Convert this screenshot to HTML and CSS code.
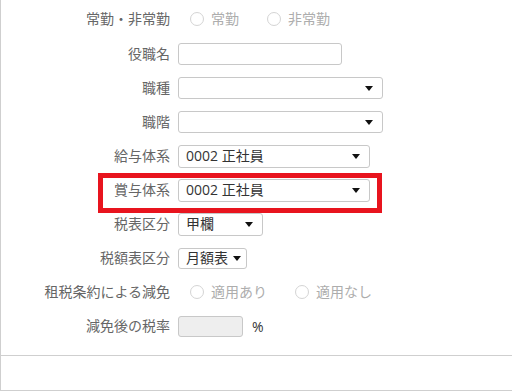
FILE: index.html
```html
<!DOCTYPE html>
<html lang="ja">
<head>
<meta charset="utf-8">
<link rel="stylesheet" href="styles.css">
</head>
<body>
<div class="panel">
  <div class="form">
    <div class="row first">
      <div class="label">常勤・非常勤</div>
      <div class="radios">
        <span class="opt"><span class="radio"></span><span class="rtext">常勤</span></span>
        <span class="opt"><span class="radio"></span><span class="rtext">非常勤</span></span>
      </div>
    </div>
    <div class="row">
      <div class="label">役職名</div>
      <div class="input w-title"></div>
    </div>
    <div class="row">
      <div class="label">職種</div>
      <div class="select w-wide"><span class="val"></span><span class="caret"></span></div>
    </div>
    <div class="row">
      <div class="label">職階</div>
      <div class="select w-wide"><span class="val"></span><span class="caret"></span></div>
    </div>
    <div class="row">
      <div class="label">給与体系</div>
      <div class="select w-mid"><span class="val">0002 正社員</span><span class="caret"></span></div>
    </div>
    <div class="row highlight">
      <div class="label">賞与体系</div>
      <div class="select w-mid"><span class="val">0002 正社員</span><span class="caret"></span></div>
    </div>
    <div class="row">
      <div class="label">税表区分</div>
      <div class="select w-kou"><span class="val">甲欄</span><span class="caret"></span></div>
    </div>
    <div class="row">
      <div class="label">税額表区分</div>
      <div class="select compact"><span class="val">月額表</span><span class="caret"></span></div>
    </div>
    <div class="row">
      <div class="label">租税条約による減免</div>
      <div class="radios">
        <span class="opt"><span class="radio"></span><span class="rtext">適用あり</span></span>
        <span class="opt"><span class="radio"></span><span class="rtext">適用なし</span></span>
      </div>
    </div>
    <div class="row">
      <div class="label">減免後の税率</div>
      <div class="input w-rate disabled"></div>
      <span class="unit">%</span>
    </div>
  </div>
  <div class="footer"></div>
</div>
</body>
</html>
```

FILE: styles.css
```css
html, body {
  margin: 0;
  padding: 0;
  background: #fff;
}
body {
  font-family: "Open Sans", "Noto Sans CJK JP", sans-serif;
  font-size: 14px;
  color: #333;
}
.panel {
  border-left: 1px solid #cfcfcf;
  width: 511px;
}
.form {
  height: 356px;
  box-sizing: border-box;
  padding-top: 1px;
  border-bottom: 1px solid #cfcfcf;
}
.footer {
  height: 34px;
  border-bottom: 1px solid #cfcfcf;
}
.row {
  display: flex;
  align-items: center;
  height: 34px;
  position: relative;
}
.row.first {
  height: 36px;
}
.label {
  width: 169px;
  text-align: right;
  color: #666;
  line-height: 20px;
  margin-right: 8px;
  white-space: nowrap;
}
.radios {
  display: flex;
  align-items: center;
  margin-left: 12px;
}
.opt {
  display: flex;
  align-items: center;
  margin-right: 28px;
}
.radio {
  width: 12px;
  height: 12px;
  border: 1px solid #d4d4d4;
  border-radius: 50%;
  background: #fff;
  margin-right: 7px;
}
.rtext {
  color: #adadad;
  line-height: 20px;
}
.input {
  height: 20px;
  border: 1px solid #c8c8c8;
  border-radius: 3px;
  background: #fff;
}
.input.disabled {
  background: #eeeeee;
}
.w-title { width: 162px; }
.w-rate { width: 63px; height: 19px; }
.select {
  display: flex;
  align-items: center;
  justify-content: space-between;
  height: 21px;
  border: 1px solid #c8c8c8;
  border-radius: 3px;
  background: #fff;
  padding: 0 9px 0 7px;
  box-sizing: content-box;
}
.val {
  color: #333;
  line-height: 20px;
  white-space: nowrap;
}
.caret {
  width: 0;
  height: 0;
  border-left: 4px solid transparent;
  border-right: 4px solid transparent;
  border-top: 5px solid #111;
  margin-top: 1px;
}
.w-wide { width: 187px; height: 20px; }
.w-mid { width: 174px; }
.w-kou { width: 67px; }
.select.compact {
  height: 19px;
  padding-right: 5px;
  justify-content: flex-start;
}
.select.compact .caret { margin-left: 5px; }
.unit {
  margin-left: 9px;
  color: #333;
}
.highlight::after {
  content: "";
  position: absolute;
  left: 97px;
  top: 0;
  width: 274px;
  height: 30px;
  border: 5px solid #e8141e;
  pointer-events: none;
}
```
